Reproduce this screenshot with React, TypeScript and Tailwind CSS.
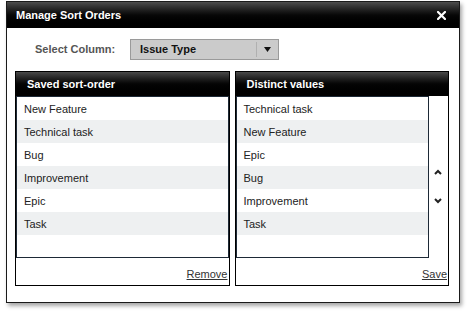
import React from "react";

const saved = ["New Feature", "Technical task", "Bug", "Improvement", "Epic", "Task"];
const distinct = ["Technical task", "New Feature", "Epic", "Bug", "Improvement", "Task"];

function ListBox({ items, width }: { items: string[]; width: string }) {
  return (
    <div className={`h-[162px] ${width} border border-[#1d2936] bg-white`}>
      {items.map((item, i) => (
        <div
          key={item}
          className={`flex h-[23px] items-center pl-[7px] pt-px text-[11px] text-[#222] ${
            i % 2 === 1 ? "bg-[#eef0f1]" : "bg-white"
          }`}
        >
          {item}
        </div>
      ))}
    </div>
  );
}

function PanelHeader({ title }: { title: string }) {
  return (
    <div className="flex h-[24px] items-center bg-gradient-to-b from-[#4a4a4a] via-[#050505] to-black pl-[11px] text-[11px] font-bold text-white">
      {title}
    </div>
  );
}

export default function App() {
  return (
    <div
      className="h-[314px] w-[467px] bg-white pl-[6px] pt-[1px]"
      style={{ fontFamily: '"Liberation Sans", Arial, sans-serif' }}
    >
      <div className="h-[302px] w-[454px] border border-[#1a1a1a] bg-white shadow-[2px_3px_4px_rgba(0,0,0,0.35)]">
        {/* title bar */}
        <div className="flex h-[26px] items-center justify-between bg-gradient-to-b from-[#4d4d4d] via-[#080808] to-black pl-[9px] pr-[13px]">
          <span className="text-[11px] font-bold text-white">Manage Sort Orders</span>
          <svg width="9" height="9" viewBox="0 0 9 9">
            <path d="M1 1 L8 8 M8 1 L1 8" stroke="white" strokeWidth="2.2" strokeLinecap="square" />
          </svg>
        </div>

        <div className="pl-[8px] pr-[10px] pt-[11px]">
          {/* select column */}
          <div className="flex h-[21px] items-center">
            <span className="ml-[20px] w-[95px] text-[11px] font-bold text-[#555]">Select Column:</span>
            <div className="flex h-[21px] w-[149px] items-center border border-[#9a9a9a] bg-[#cbcbcb]">
              <span className="flex-1 pl-[9px] text-[11px] font-bold text-[#111]">Issue Type</span>
              <div className="h-[15px] w-px bg-[#b0b0b0]" />
              <div className="flex w-[21px] justify-center">
                <svg width="7" height="5" viewBox="0 0 7 5">
                  <path d="M0 0 L7 0 L3.5 5 Z" fill="#111" />
                </svg>
              </div>
            </div>
          </div>

          {/* panels */}
          <div className="mt-[11px] flex gap-[5px]">
            <div className="w-[215px] border border-black">
              <PanelHeader title="Saved sort-order" />
              <ListBox items={saved} width="w-full" />
              <div className="flex h-[27px] items-end justify-end pb-[3px] pr-[1px]">
                <span className="text-[11px] text-[#333] underline">Remove</span>
              </div>
            </div>

            <div className="w-[215px] border border-black">
              <PanelHeader title="Distinct values" />
              <div className="flex">
                <ListBox items={distinct} width="w-[193px]" />
                <div className="flex flex-1 flex-col items-center pt-[73px]">
                  <svg width="8" height="6" viewBox="0 0 8 6">
                    <path d="M1 5 L4 2 L7 5" stroke="#222" strokeWidth="2" fill="none" />
                  </svg>
                  <svg className="mt-[23px]" width="8" height="6" viewBox="0 0 8 6">
                    <path d="M1 1 L4 4 L7 1" stroke="#222" strokeWidth="2" fill="none" />
                  </svg>
                </div>
              </div>
              <div className="flex h-[27px] items-end justify-end pb-[3px] pr-[1px]">
                <span className="text-[11px] text-[#333] underline">Save</span>
              </div>
            </div>
          </div>
        </div>
      </div>
    </div>
  );
}
